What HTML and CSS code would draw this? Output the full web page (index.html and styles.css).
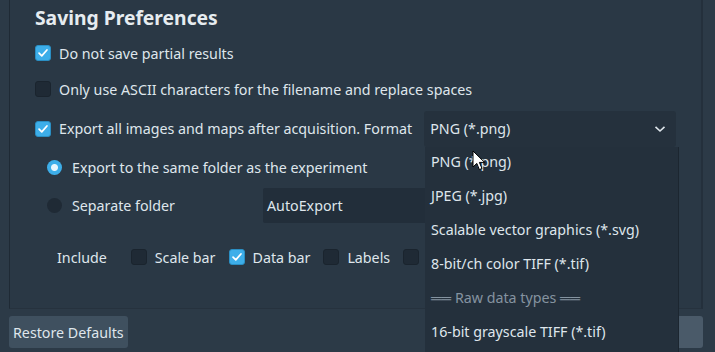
FILE: index.html
```html
<!DOCTYPE html>
<html>
<head>
<meta charset="utf-8">
<link rel="stylesheet" href="styles.css">
</head>
<body>
<div class="page">
  <div class="frame">
    <div class="heading">Saving Preferences</div>
    <div class="row r1"><span class="cb on"><svg viewBox="0 0 16 16"><path d="M3.5 8.2 L6.6 11.2 L12.5 4.6" /></svg></span><span>Do not save partial results</span></div>
    <div class="row r2"><span class="cb"></span><span>Only use ASCII characters for the filename and replace spaces</span></div>
    <div class="row r3"><span class="cb on"><svg viewBox="0 0 16 16"><path d="M3.5 8.2 L6.6 11.2 L12.5 4.6" /></svg></span><span class="fmt-label">Export all images and maps after acquisition. Format</span>
      <div class="combo"><span>PNG (*.png)</span><svg class="chev" viewBox="0 0 12 8"><path d="M1.5 1.8 L6 6 L10.5 1.8"/></svg></div>
    </div>
    <div class="row radio-row r4"><span class="rb on"></span><span>Export to the same folder as the experiment</span></div>
    <div class="row radio-row r5"><span class="rb"></span><span class="sep-label">Separate folder</span><div class="field">AutoExport</div></div>
    <div class="row include">
      <span class="inc-label">Include</span>
      <span class="cb"></span><span class="opt">Scale bar</span>
      <span class="cb on"><svg viewBox="0 0 16 16"><path d="M3.5 8.2 L6.6 11.2 L12.5 4.6" /></svg></span><span class="opt">Data bar</span>
      <span class="cb"></span><span class="opt">Labels</span>
      <span class="cb"></span>
    </div>
  </div>
  <div class="bottom">
    <button class="btn">Restore Defaults</button>
    <button class="btn right"></button>
  </div>

  <div class="popup">
    <div class="item">PNG (*.png)</div>
    <div class="item">JPEG (*.jpg)</div>
    <div class="item">Scalable vector graphics (*.svg)</div>
    <div class="item">8-bit/ch color TIFF (*.tif)</div>
    <div class="item dim">══ Raw data types ══</div>
    <div class="item">16-bit grayscale TIFF (*.tif)</div>
  </div>
  <svg class="cursor" viewBox="0 0 14 22"><path d="M1 1 L1 17 L4.8 13.4 L7.4 19.6 L10 18.5 L7.4 12.4 L12.6 12.4 Z"/></svg>
</div>
</body>
</html>
```

FILE: styles.css
```css
* { box-sizing: border-box; }
html, body { margin: 0; padding: 0; }
body {
  width: 715px;
  height: 352px;
  overflow: hidden;
  background: #2c3a47;
  font-family: "Noto Sans", "Open Sans", sans-serif;
  font-size: 14.25px;
  color: #dfe6ec;
}
.page {
  position: relative;
  width: 715px;
  height: 352px;
}
.frame {
  margin-left: 9px;
  width: 694px;
  height: 309px;
  background: #2a3845;
  border-left: 1px solid #1f2a35;
  border-right: 2px solid #24303c;
  border-bottom: 1px solid #26323e;
  padding-left: 25px;
  display: flex;
  flex-direction: column;
}
.heading {
  height: 35px;
  font-size: 19.3px;
  font-weight: 700;
  line-height: 35px;
  color: #e6ecf0;
}
.row {
  display: flex;
  align-items: center;
  height: 36px;
}
.r3 { margin-top: 3px; height: 37px; }
.r4 { height: 38px; margin-top: 1px; }
.r5 { height: 38px; }
.include { height: 36px; margin-top: 15px; padding-left: 22px; }
.cb {
  width: 16px;
  height: 16px;
  border-radius: 3px;
  background: #1f2a35;
  border: 1px solid #1a242e;
  margin-right: 8px;
  flex: none;
  display: flex;
}
.cb.on {
  background: #3daee9;
  border-color: #2a8fc4;
}
.cb svg { width: 14px; height: 14px; }
.cb svg path { fill: none; stroke: #ffffff; stroke-width: 2; stroke-linecap: round; stroke-linejoin: round; }
.fmt-label { margin-right: 12px; }
.combo {
  width: 252px;
  height: 36px;
  background: #25313d;
  border-radius: 3px;
  display: flex;
  align-items: center;
  justify-content: space-between;
  padding: 0 10px 0 6px;
}
.chev { width: 12px; height: 8px; }
.chev path { fill: none; stroke: #dfe6ec; stroke-width: 1.6; }
.radio-row { padding-left: 12px; }
.rb {
  width: 15px;
  height: 15px;
  border-radius: 50%;
  background: #1f2a35;
  margin-right: 10px;
  flex: none;
}
.rb.on {
  background: radial-gradient(circle, #e8f6fd 0 3px, #3daee9 4px);
}
.sep-label { width: 191px; }
.field {
  width: 200px;
  height: 35px;
  background: #222e3a;
  border-radius: 2px;
  display: flex;
  align-items: center;
  padding-left: 4px;
}
.inc-label { margin-right: 24px; }
.opt { margin-right: 13px; }
.bottom {
  display: flex;
  justify-content: space-between;
  padding: 7px 12px 0 9px;
}
.btn {
  height: 32px;
  background: #3f505f;
  border: none;
  border-radius: 3px;
  color: #dfe6ec;
  font-family: "Noto Sans", "Open Sans", sans-serif;
  font-size: 14.25px;
  padding: 0 4px;
}
.btn.right { width: 60px; background: #4a5a69; }
.popup {
  position: absolute;
  left: 425px;
  top: 147px;
  width: 254px;
  height: 210px;
  background: #24303c;
  border-right: 1px solid #1c2630;
}
.item {
  height: 34px;
  padding: 0 0 6px 6px;
  display: flex;
  align-items: center;
}
.item.dim { color: #8593a0; }
.cursor {
  position: absolute;
  left: 472px;
  top: 150px;
  width: 14px;
  height: 22px;
}
.cursor path { fill: #ffffff; stroke: #000000; stroke-width: 1; }
```
